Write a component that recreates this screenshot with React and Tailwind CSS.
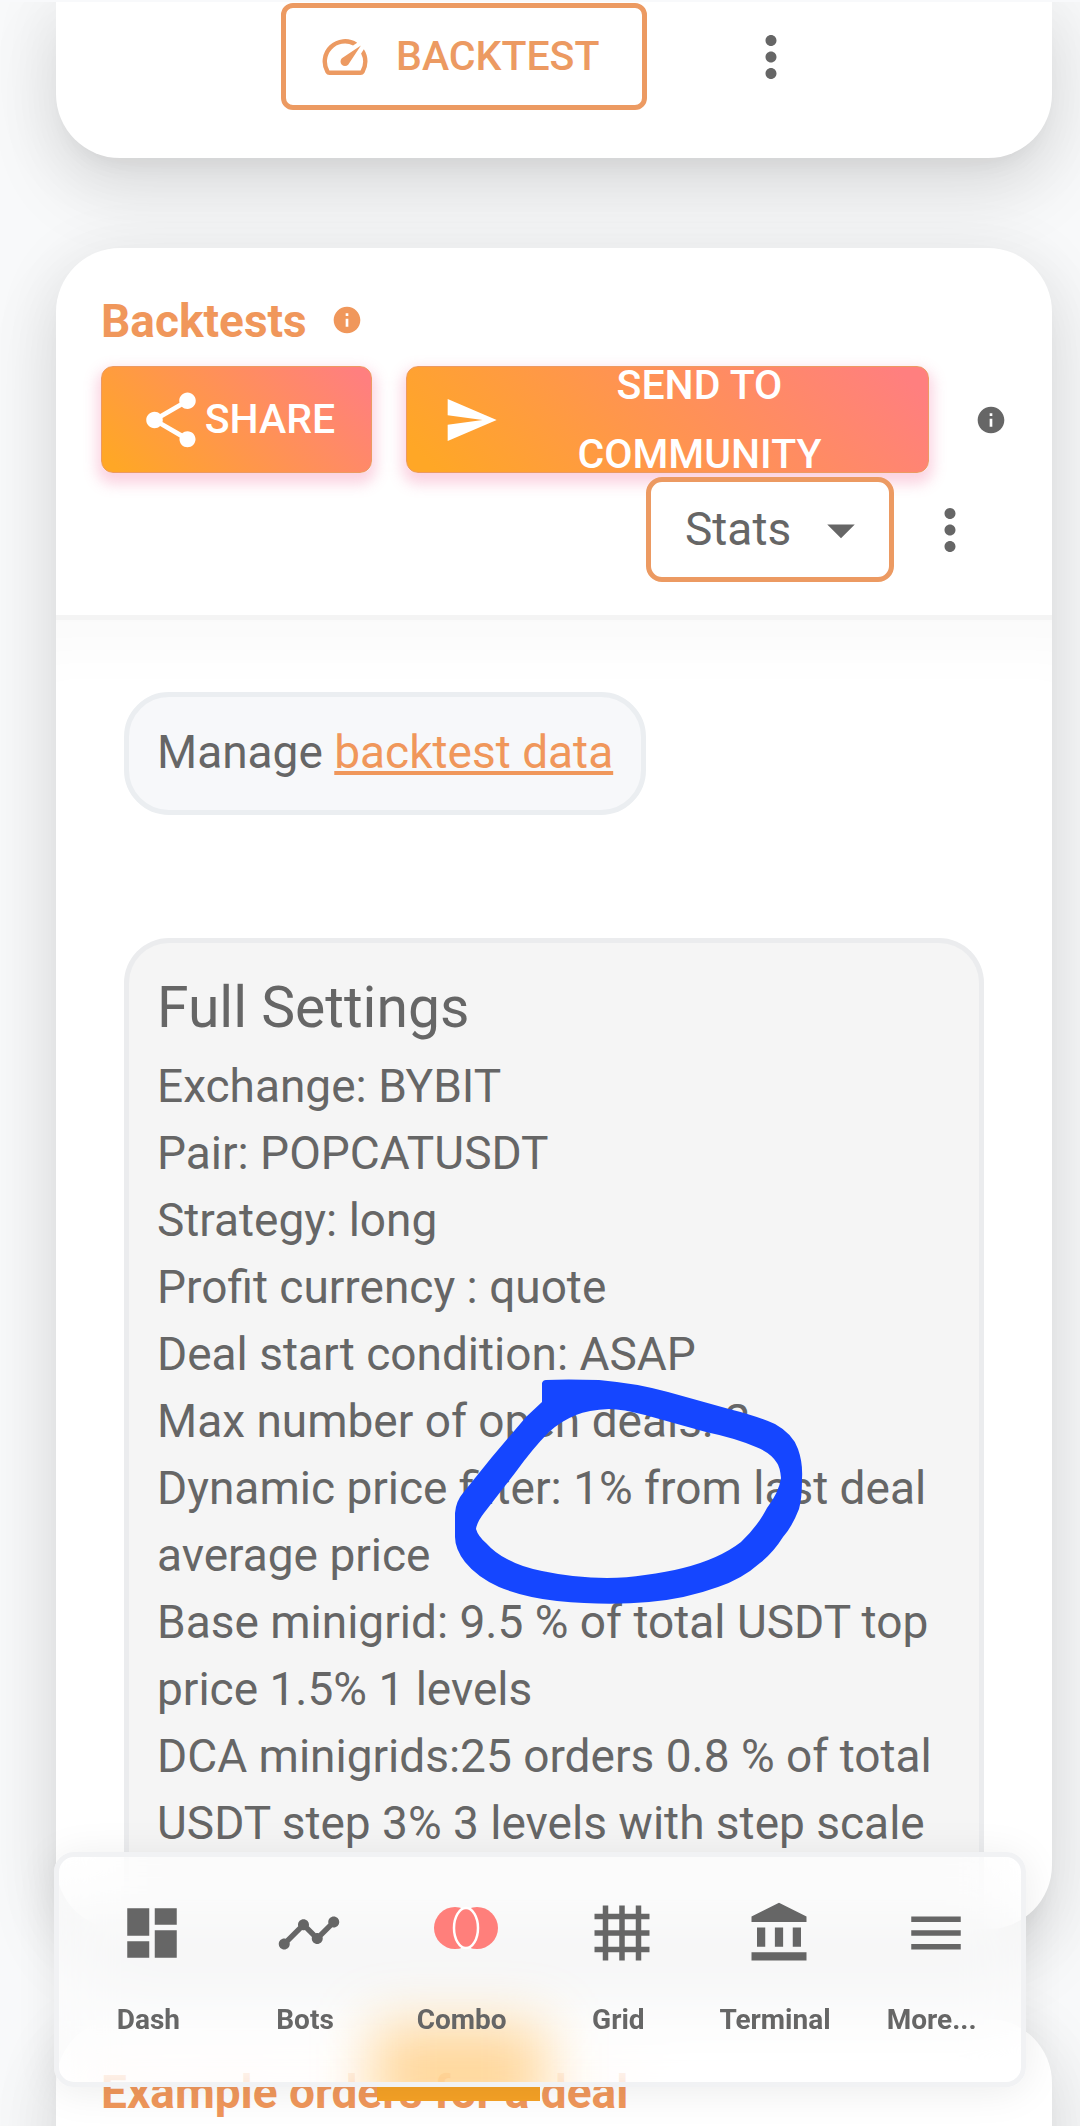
import React, { useState } from 'react';
import {
  MdAccountBalance,
  MdArrowDropDown,
  MdDashboard,
  MdGrid4X4,
  MdInfo,
  MdMenu,
  MdMoreVert,
  MdSend,
  MdShare,
  MdSpeed,
  MdTimeline,
} from 'react-icons/md';

const CARD = 'bg-white shadow-[0_16px_24px_-14px_rgba(0,0,0,0.07),0_36px_70px_8px_rgba(0,0,0,0.07),0_10px_60px_12px_rgba(0,0,0,0.06)]';
const GRADIENT_BUTTON = 'flex h-[107px] items-center rounded-xl border border-[#ec9a62] bg-linear-[45deg,#ffa726_5%,#ff7f7f_95%] text-[41px] font-medium text-white uppercase shadow-[0_7px_14px_4px_rgba(240,98,146,0.28)]';

const settings = [
  'Exchange: BYBIT',
  'Pair: POPCATUSDT',
  'Strategy: long',
  'Profit currency : quote',
  'Deal start condition: ASAP',
  'Max number of open deals: 2',
  'Dynamic price filter: 1% from last deal average price',
  'Base minigrid: 9.5 % of total USDT top price 1.5% 1 levels',
  'DCA minigrids:25 orders 0.8 % of total USDT step 3% 3 levels with step scale',
];

function ComboIcon({ size }) {
  return (
    <svg width={size} height={size} viewBox="0 0 66 66" aria-hidden="true">
      <circle cx="22" cy="28" r="21" fill="#ff7f7b" />
      <circle cx="44" cy="28" r="21" fill="#ff7f7b" />
      <ellipse cx="33" cy="28" rx="12" ry="20" fill="#ff7f7b" stroke="#fff" strokeWidth="2.5" />
    </svg>
  );
}

const navItems = [
  { label: 'Dash', icon: MdDashboard },
  { label: 'Bots', icon: MdTimeline },
  { label: 'Combo', icon: ComboIcon },
  { label: 'Grid', icon: MdGrid4X4 },
  { label: 'Terminal', icon: MdAccountBalance },
  { label: 'More...', icon: MdMenu },
];

function MoreButton() {
  return (
    <button type="button" aria-label="More options" className="text-[#666]">
      <MdMoreVert size={66} />
    </button>
  );
}

function InkCircle() {
  return (
    <svg
      viewBox="0 0 348 226"
      className="pointer-events-none absolute top-[436px] left-[326px] w-[348px]"
      aria-hidden="true"
    >
      <path
        fill="#1546ff"
        fillRule="evenodd"
        d="M87 4Q88 1 91 1Q110 0 144 1Q180 4 213 13L274 30Q302 37 320 45Q338 55 343 70Q348 84 347 100Q347 120 344 130Q337 148 328 158Q318 174 305 184Q287 200 263 208Q230 220 194 223Q152 227 102 222Q68 218 44 208Q22 198 10 183Q0 170 0 158V134Q1 122 8 114L37 78L71 38L87 23ZM154 30Q133 31 121 36Q106 42 94 53Q78 69 60 94L29 134Q22 143 21 150Q23 157 31 164Q40 174 52 180Q66 188 87 192Q120 199 152 199Q172 199 190 196Q212 193 228 189Q264 180 286 163Q302 148 312 129Q324 113 326 99Q325 88 322 84Q316 74 301 68Q280 59 251 53L190 36Q168 30 154 30Z"
      />
    </svg>
  );
}

export default function App() {
  const [view, setView] = useState('stats');
  const [active, setActive] = useState('Combo');

  return (
    <div className="h-screen overflow-hidden border-t-2 border-[#f8f9fb] bg-[#f8f9fa] font-['Roboto',sans-serif] text-[#666]">
      <main className="flex flex-col gap-[90px] pr-7 pl-14">
        <section className={`${CARD} flex h-[156px] items-start gap-[91px] rounded-b-[64px] pl-[225px]`}>
          <button
            type="button"
            className="mt-px flex h-[107px] w-[366px] items-center gap-6 rounded-xl border-5 border-[#ec9a62] pl-8 text-[41px] font-medium text-[#ec9a62] uppercase"
          >
            <MdSpeed size={54} />
            Backtest
          </button>
          <div className="mt-[22px]">
            <MoreButton />
          </div>
        </section>

        <section className={`${CARD} h-[1681px] rounded-[64px]`}>
          <header className="border-b-5 border-[#f4f4f4] px-[45px] pt-10 pb-[33px]">
            <div className="flex h-[78px] items-start gap-6 text-[#f0975b]">
              <h2 className="text-[46px] leading-[67px] font-bold">Backtests</h2>
              <MdInfo size={32} className="mt-4" />
            </div>
            <div className="flex items-center">
              <button type="button" className={`${GRADIENT_BUTTON} mr-[34px] w-[271px] justify-center gap-px`}>
                <MdShare size={66} />
                Share
              </button>
              <button type="button" className={`${GRADIENT_BUTTON} mr-[46px] flex-1 gap-2 px-9`}>
                <MdSend size={56} className="shrink-0" />
                <span className="flex-1 leading-[69px]">Send to community</span>
              </button>
              <MdInfo size={32} />
            </div>
            <div className="mt-1 flex items-center justify-end gap-[23px] pr-6">
              <div className="relative">
                <select
                  aria-label="View"
                  value={view}
                  onChange={e => setView(e.target.value)}
                  className="h-[105px] w-[248px] appearance-none rounded-2xl border-5 border-[#ec9a62] bg-white pl-[34px] text-[46px]"
                >
                  <option value="stats">Stats</option>
                  <option value="chart">Chart</option>
                  <option value="deals">Deals</option>
                </select>
                <MdArrowDropDown size={66} className="pointer-events-none absolute top-5 right-5" />
              </div>
              <MoreButton />
            </div>
          </header>

          <div className="flex flex-col items-start gap-[123px] px-[68px] pt-[72px] text-[46px] leading-[67px] shadow-[inset_0_80px_60px_-50px_rgba(0,0,0,0.025)]">
            <p className="rounded-[45px] border-5 border-[#ebeef1] bg-[#f7f8fa] px-7 pt-[22px] pb-6">
              Manage{' '}
              <a href="#backtest-data" className="text-[#f0975b] underline">backtest data</a>
            </p>

            <div className="relative w-full rounded-t-[45px] border-5 border-b-0 border-[#ebecee] bg-[#f5f5f5] px-7 pt-7 pb-14">
              <h3 className="mb-2 text-[57px] leading-[74px]">Full Settings</h3>
              <ul>
                {settings.map(line => (
                  <li key={line}>{line}</li>
                ))}
              </ul>
              <InkCircle />
            </div>
          </div>
        </section>

        <section className={`${CARD} h-[400px] rounded-[64px] px-[45px] pt-10`}>
          <h2 className="text-[46px] leading-[67px] font-bold text-[#f0975b]">Example orders for a deal</h2>
        </section>
      </main>

      {/* Bottom navigation, the gold strip glows through its glass */}
      <div className="fixed bottom-[25px] left-[377px] h-4 w-[163px] bg-[#f6a226]" />
      <nav className="fixed right-[54px] bottom-[39px] left-[54px] flex h-[235px] overflow-hidden rounded-[20px] border-5 border-[#f1f2f4] bg-white/60 px-[11px] pt-[43px] shadow-[0_4px_40px_rgba(0,0,0,0.08)] backdrop-blur-[28px]">
        <div className="absolute -bottom-10 left-[314px] h-[98px] w-[172px] bg-[#ffae33]/48 blur-[28px]" />
        {navItems.map(({ label, icon: Icon }) => (
          <button
            key={label}
            type="button"
            aria-current={active === label ? 'page' : undefined}
            onClick={() => setActive(label)}
            className="relative flex flex-1 flex-col items-center gap-9 text-[28px] leading-9 font-bold"
          >
            <span className="ml-2">
              <Icon size={66} />
            </span>
            {label}
          </button>
        ))}
      </nav>
    </div>
  );
}
